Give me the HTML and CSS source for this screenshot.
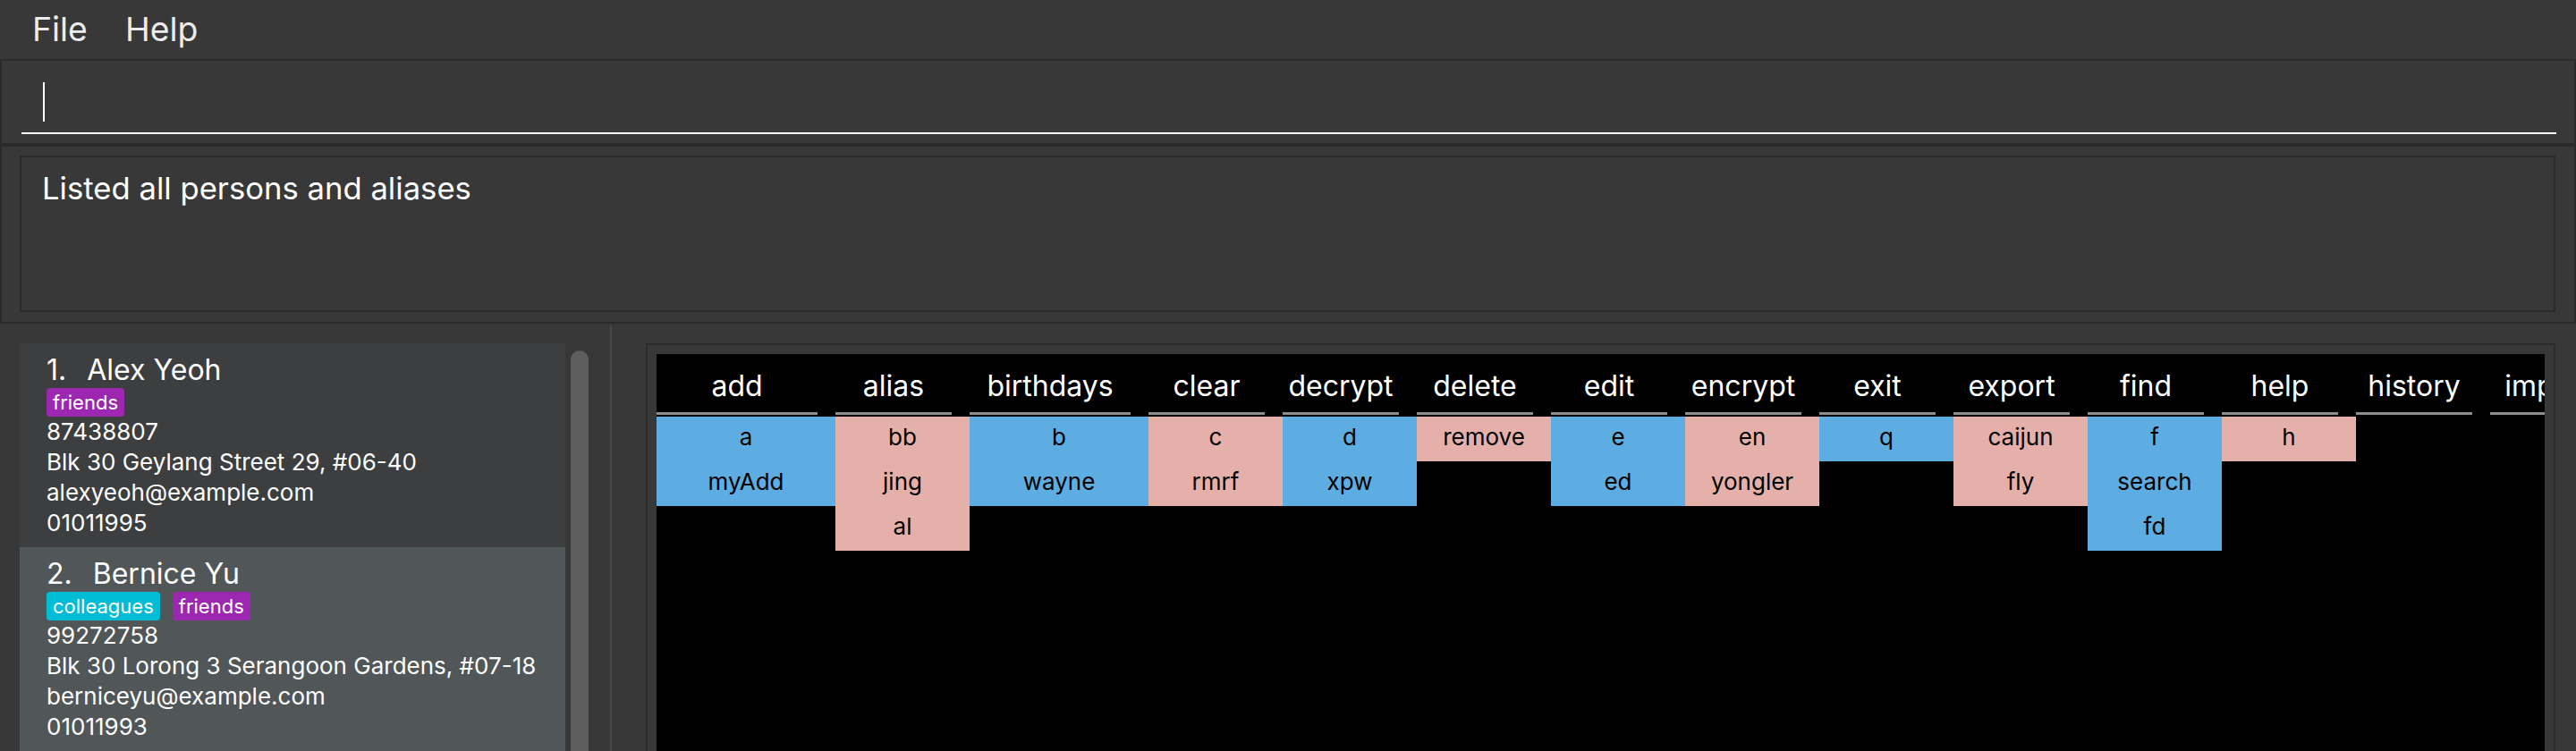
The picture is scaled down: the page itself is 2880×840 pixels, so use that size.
FILE: index.html
```html
<!DOCTYPE html>
<html lang="en">
<head>
<meta charset="utf-8">
<title>Address App</title>
<link rel="stylesheet" href="styles.css">
</head>
<body>
<div class="app">
  <nav class="menubar">
    <span class="menu-item">File</span>
    <span class="menu-item">Help</span>
  </nav>

  <section class="pane command-pane">
    <div class="command-field"><span class="caret"></span></div>
  </section>

  <section class="pane result-pane">
    <div class="result-box">Listed all persons and aliases</div>
  </section>

  <div class="split">
    <div class="list-side">
      <div class="cards">
        <div class="card card-odd">
          <div class="card-name"><span class="card-id">1.</span><span>Alex Yeoh</span></div>
          <div class="tags"><span class="tag tag-friends">friends</span></div>
          <div class="card-line">87438807</div>
          <div class="card-line">Blk 30 Geylang Street 29, #06-40</div>
          <div class="card-line">alexyeoh@example.com</div>
          <div class="card-line">01011995</div>
        </div>
        <div class="card card-even">
          <div class="card-name"><span class="card-id">2.</span><span>Bernice Yu</span></div>
          <div class="tags"><span class="tag tag-colleagues">colleagues</span><span class="tag tag-friends">friends</span></div>
          <div class="card-line">99272758</div>
          <div class="card-line">Blk 30 Lorong 3 Serangoon Gardens, #07-18</div>
          <div class="card-line">berniceyu@example.com</div>
          <div class="card-line">01011993</div>
        </div>
      </div>
      <div class="scrollbar"><div class="thumb"></div></div>
    </div>

    <div class="divider"></div>

    <div class="table-side">
      <div class="table-frame">
        <div class="alias-table">
          <div class="col col-wide"><div class="col-head">add</div><div class="cell blue">a</div><div class="cell blue">myAdd</div></div>
          <div class="col"><div class="col-head">alias</div><div class="cell pink">bb</div><div class="cell pink">jing</div><div class="cell pink">al</div></div>
          <div class="col col-wide"><div class="col-head">birthdays</div><div class="cell blue">b</div><div class="cell blue">wayne</div></div>
          <div class="col"><div class="col-head">clear</div><div class="cell pink">c</div><div class="cell pink">rmrf</div></div>
          <div class="col"><div class="col-head">decrypt</div><div class="cell blue">d</div><div class="cell blue">xpw</div></div>
          <div class="col"><div class="col-head">delete</div><div class="cell pink">remove</div></div>
          <div class="col"><div class="col-head">edit</div><div class="cell blue">e</div><div class="cell blue">ed</div></div>
          <div class="col"><div class="col-head">encrypt</div><div class="cell pink">en</div><div class="cell pink">yongler</div></div>
          <div class="col"><div class="col-head">exit</div><div class="cell blue">q</div></div>
          <div class="col"><div class="col-head">export</div><div class="cell pink">caijun</div><div class="cell pink">fly</div></div>
          <div class="col"><div class="col-head">find</div><div class="cell blue">f</div><div class="cell blue">search</div><div class="cell blue">fd</div></div>
          <div class="col"><div class="col-head">help</div><div class="cell pink">h</div></div>
          <div class="col"><div class="col-head">history</div></div>
          <div class="col"><div class="col-head">import</div></div>
        </div>
      </div>
    </div>
  </div>
</div>
</body>
</html>
```

FILE: styles.css
```css
* {
  box-sizing: border-box;
}

html, body {
  margin: 0;
  padding: 0;
}

body {
  width: 2880px;
  height: 840px;
  overflow: hidden;
  background: #383838;
  font-family: Inter, "Liberation Sans", sans-serif;
  color: #ffffff;
}

.app {
  display: flex;
  flex-direction: column;
  width: 2880px;
  height: 840px;
}

/* ---------- menu ---------- */
.menubar {
  height: 66px;
  flex: none;
  display: flex;
  align-items: center;
  gap: 42px;
  padding-left: 36px;
  font-size: 37.33px;
  line-height: 66px;
  color: #ececec;
  background: #383838;
}

/* ---------- panes ---------- */
.pane {
  flex: none;
  border: 2px solid #2a2a2a;
  background: #383838;
}

.command-pane {
  height: 96px;
  padding: 10px 20px 10px 22px;
}

.command-field {
  height: 72px;
  border-bottom: 2px solid #ffffff;
  display: flex;
  align-items: flex-start;
}

.caret {
  width: 2px;
  height: 44px;
  margin-top: 14px;
  margin-left: 24px;
  background: #ffffff;
}

.result-pane {
  height: 200px;
  padding: 10px 21px 11px 20px;
}

.result-box {
  height: 100%;
  border: 2px solid #2a2a2a;
  padding: 13px 23px;
  font-size: 34.67px;
  line-height: 42px;
  color: #ffffff;
}

/* ---------- split ---------- */
.split {
  flex: 1;
  display: flex;
  min-height: 0;
}

.list-side {
  width: 682px;
  flex: none;
  display: flex;
  padding: 22px 0 0 22px;
  overflow: hidden;
}

.cards {
  width: 610px;
  flex: none;
  display: flex;
  flex-direction: column;
}

.card {
  height: 228px;
  flex: none;
  padding: 10px 20px 10px 30px;
}

.card-odd {
  background: #3c3e3f;
}

.card-even {
  background: #515658;
}

.card-name {
  font-size: 32px;
  line-height: 40px;
  height: 40px;
  white-space: nowrap;
}

.card-id {
  margin-right: 23px;
}

.tags {
  display: flex;
  gap: 14px;
  height: 32px;
}

.tag {
  font-size: 22px;
  line-height: 32px;
  height: 32px;
  padding: 0 7px;
  border-radius: 4px;
  color: #ffffff;
}

.tag-friends {
  background: #9c27b0;
}

.tag-colleagues {
  background: #00bcd4;
}

.card-line {
  font-size: 26px;
  line-height: 34px;
  height: 34px;
  white-space: nowrap;
}

.scrollbar {
  width: 20px;
  flex: none;
  margin-left: 6px;
  padding-top: 8px;
}

.thumb {
  height: 600px;
  border-radius: 10px;
  background: #5e5e5e;
}

.divider {
  width: 2px;
  flex: none;
  margin-top: 2px;
  background: #4a4a4a;
}

.table-side {
  flex: 1;
  min-width: 0;
  padding: 22px 23px 0 38px;
  display: flex;
}

.table-frame {
  flex: 1;
  min-width: 0;
  border: 2px solid #2a2a2a;
  border-bottom: none;
  padding: 10px 10px 0 10px;
  display: flex;
}

.alias-table {
  flex: 1;
  min-width: 0;
  background: #000000;
  display: flex;
  align-items: flex-start;
  overflow: hidden;
}

.col {
  width: 150px;
  flex: none;
  display: flex;
  flex-direction: column;
}

.col-wide {
  width: 200px;
}

.col-head {
  width: calc(100% - 20px);
  height: 68px;
  padding-top: 6px;
  line-height: 59px;
  font-size: 32px;
  text-align: center;
  color: #ffffff;
  border-bottom: 3px solid #8c8c8c;
  margin-bottom: 2px;
  white-space: nowrap;
}

.cell {
  height: 50px;
  line-height: 45px;
  padding-bottom: 5px;
  font-size: 26px;
  text-align: center;
  color: #000000;
  white-space: nowrap;
}

.blue {
  background: #5dade2;
}

.pink {
  background: #e6b0aa;
}
```
